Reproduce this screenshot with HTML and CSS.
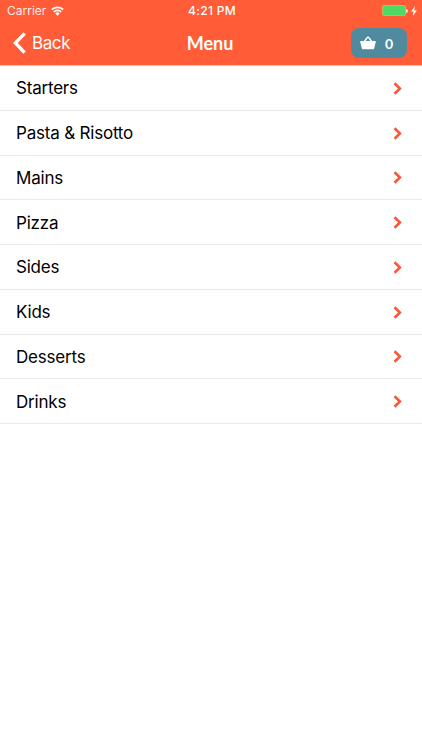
FILE: index.html
```html
<!DOCTYPE html>
<html lang="en">
<head>
  <meta charset="UTF-8" />
  <meta name="viewport" content="width=device-width, initial-scale=1.0" />
  <title>Menu</title>
  <link rel="stylesheet" href="styles.css">
</head>
<body>
  <header class="header">
    <div class="status-bar">
      <div class="carrier">
        <span>Carrier</span>
        <svg class="wifi" width="13" height="10" viewBox="0 0 13 10" fill="none" stroke="#fff" stroke-width="1.6">
          <path d="M0.8 3.6a8.3 8.3 0 0 1 11.4 0" />
          <path d="M2.8 5.9a5.3 5.3 0 0 1 7.4 0" />
          <path d="M6.5 9.8L4.3 7.5a3 3 0 0 1 4.4 0z" fill="#fff" stroke="none" />
        </svg>
      </div>
      <div class="time">4:21 PM</div>
      <div class="power">
        <div class="battery"></div>
        <div class="battery-tip"></div>
        <svg class="bolt" width="6" height="10" viewBox="0 0 6 10" fill="#fff">
          <path d="M3.9 0L0.2 5.4h2.3L1.9 10l3.9-5.6H3.3z" />
        </svg>
      </div>
    </div>
    <nav class="nav-bar">
      <a class="back">
        <svg width="13" height="22" viewBox="0 0 13 22" fill="none" stroke="#fff" stroke-width="3.4">
          <path d="M11.6 1.4L2.4 11l9.2 9.6" />
        </svg>
        <span>Back</span>
      </a>
      <h1 class="title">Menu</h1>
      <a class="basket">
        <svg width="16" height="14" viewBox="0 0 16 14" fill="#fff">
          <path d="M4 6L7.2 1.6a1 1 0 0 1 1.6 0L12 6" fill="none" stroke="#fff" stroke-width="1.5" />
          <path d="M0.7 5h14.6q0.6 0 0.5 0.7l-1.7 6.7q-0.3 0.9-1.2 0.9H3.1q-0.9 0-1.2-0.9L0.2 5.7Q0.1 5 0.7 5z" />
        </svg>
        <span>0</span>
      </a>
    </nav>
  </header>

  <ul class="menu-list">
    <li><span>Starters</span><svg class="arrow" viewBox="0 0 9 13"><path d="M1.5 1.2L6.9 6.5l-5.4 5.3" /></svg></li>
    <li><span>Pasta &amp; Risotto</span><svg class="arrow" viewBox="0 0 9 13"><path d="M1.5 1.2L6.9 6.5l-5.4 5.3" /></svg></li>
    <li><span>Mains</span><svg class="arrow" viewBox="0 0 9 13"><path d="M1.5 1.2L6.9 6.5l-5.4 5.3" /></svg></li>
    <li><span>Pizza</span><svg class="arrow" viewBox="0 0 9 13"><path d="M1.5 1.2L6.9 6.5l-5.4 5.3" /></svg></li>
    <li><span>Sides</span><svg class="arrow" viewBox="0 0 9 13"><path d="M1.5 1.2L6.9 6.5l-5.4 5.3" /></svg></li>
    <li><span>Kids</span><svg class="arrow" viewBox="0 0 9 13"><path d="M1.5 1.2L6.9 6.5l-5.4 5.3" /></svg></li>
    <li><span>Desserts</span><svg class="arrow" viewBox="0 0 9 13"><path d="M1.5 1.2L6.9 6.5l-5.4 5.3" /></svg></li>
    <li><span>Drinks</span><svg class="arrow" viewBox="0 0 9 13"><path d="M1.5 1.2L6.9 6.5l-5.4 5.3" /></svg></li>
  </ul>
</body>
</html>
```
FILE: styles.css
```css
* {
  box-sizing: border-box;
}
body {
  margin: 0;
  background: #fff;
  color: #000;
  font-family: Inter, "Liberation Sans", sans-serif;
}
.header {
  height: 66px;
  background: #ff5c37;
  border-bottom: 1px solid #ffb9a7;
  color: #fff;
}
.status-bar {
  display: grid;
  grid-template-columns: 1fr auto 1fr;
  align-items: center;
  height: 21px;
  padding: 0 5px 0 7px;
  font-size: 12px;
}
.carrier {
  display: flex;
  align-items: center;
  gap: 5px;
}
.carrier span {
  opacity: 0.9;
}
.time {
  font-weight: 500;
  letter-spacing: 0.3px;
}
.power {
  display: flex;
  align-items: center;
  justify-content: flex-end;
}
.battery {
  width: 24px;
  height: 11px;
  background: #4cd964;
  border: 1px solid #c9b268;
  border-radius: 2px;
}
.battery-tip {
  width: 2px;
  height: 4px;
  margin: 0 3px 0 0;
  background: #ffd5ca;
  border-radius: 0 2px 2px 0;
}
.nav-bar {
  display: grid;
  grid-template-columns: 1fr auto 1fr;
  align-items: center;
  height: 44px;
  padding: 0 15px 0 13px;
}
.back {
  display: flex;
  align-items: center;
  gap: 6px;
  font-size: 17px;
  letter-spacing: -0.4px;
}
.title {
  margin: 0;
  font-family: Lato, sans-serif;
  font-size: 18px;
  font-weight: 700;
}
.basket {
  display: flex;
  align-items: center;
  justify-self: end;
  gap: 9px;
  width: 56px;
  height: 30px;
  padding-left: 9px;
  background: #4f8a9e;
  border-radius: 8px;
  font-family: Lato, sans-serif;
  font-size: 14px;
  font-weight: 700;
}
.menu-list {
  margin: 0;
  padding: 0;
  list-style: none;
}
.menu-list li {
  display: flex;
  align-items: center;
  justify-content: space-between;
  height: 44.75px;
  padding: 1px 20px 0 16px;
  border-bottom: 1px solid #e9e9eb;
  font-size: 17px;
  letter-spacing: -0.2px;
}
.arrow {
  width: 9px;
  height: 13px;
  fill: none;
  stroke: #f8593a;
  stroke-width: 2.6;
}
```
